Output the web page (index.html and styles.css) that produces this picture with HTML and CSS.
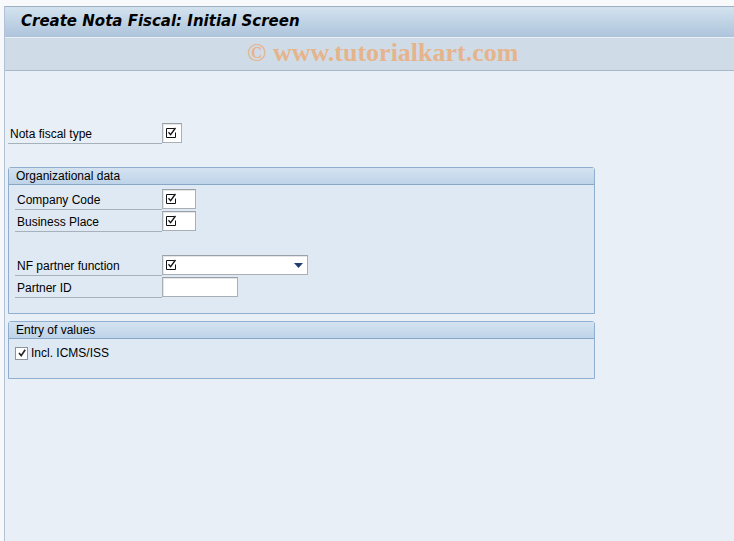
FILE: index.html
```html
<!DOCTYPE html>
<html>
<head>
<meta charset="utf-8">
<link rel="stylesheet" href="styles.css">
</head>
<body>
<div class="topstrip"></div>
<div class="frame">
  <div class="titlebar"><span class="title">Create Nota Fiscal: Initial Screen</span></div>
  <div class="toolbar"><span class="watermark">© www.tutorialkart.com</span></div>
  <div class="content">
    <div class="row nota">
      <div class="label w154">Nota fiscal type</div>
      <div class="input w20"><svg class="req" viewBox="0 0 11 11" width="11" height="11"><path d="M0.5 1.5H8.5M0.5 1.5V10.5H9.5V5.5" fill="none" stroke="#111" stroke-width="1"/><path d="M2.5 5.2L4.6 7.6L9.5 1" fill="none" stroke="#111" stroke-width="1.3"/></svg></div>
    </div>

    <div class="group g1">
      <div class="ghead">Organizational data</div>
      <div class="gbody">
        <div class="row">
          <div class="label w147">Company Code</div>
          <div class="input w34"><svg class="req" viewBox="0 0 11 11" width="11" height="11"><path d="M0.5 1.5H8.5M0.5 1.5V10.5H9.5V5.5" fill="none" stroke="#111" stroke-width="1"/><path d="M2.5 5.2L4.6 7.6L9.5 1" fill="none" stroke="#111" stroke-width="1.3"/></svg></div>
        </div>
        <div class="row">
          <div class="label w147">Business Place</div>
          <div class="input w34"><svg class="req" viewBox="0 0 11 11" width="11" height="11"><path d="M0.5 1.5H8.5M0.5 1.5V10.5H9.5V5.5" fill="none" stroke="#111" stroke-width="1"/><path d="M2.5 5.2L4.6 7.6L9.5 1" fill="none" stroke="#111" stroke-width="1.3"/></svg></div>
        </div>
        <div class="row empty"></div>
        <div class="row">
          <div class="label w147">NF partner function</div>
          <div class="input w146 dd"><svg class="req" viewBox="0 0 11 11" width="11" height="11"><path d="M0.5 1.5H8.5M0.5 1.5V10.5H9.5V5.5" fill="none" stroke="#111" stroke-width="1"/><path d="M2.5 5.2L4.6 7.6L9.5 1" fill="none" stroke="#111" stroke-width="1.3"/></svg><svg class="arrow" viewBox="0 0 9 5" width="9" height="5"><path d="M0 0H9L4.5 5Z" fill="#1f3d6e"/></svg></div>
        </div>
        <div class="row">
          <div class="label w147">Partner ID</div>
          <div class="input w76"></div>
        </div>
      </div>
    </div>

    <div class="group g2">
      <div class="ghead">Entry of values</div>
      <div class="gbody2">
        <div class="cbrow">
          <span class="cb"><svg viewBox="0 0 10 10" width="10" height="10"><path d="M2 5L4.2 7.6L8.2 1.8" fill="none" stroke="#222" stroke-width="1.6"/></svg></span>
          <span class="cblabel">Incl. ICMS/ISS</span>
        </div>
      </div>
    </div>
  </div>
</div>
</body>
</html>
```

FILE: styles.css
```css
html, body {
  margin: 0;
  padding: 0;
  height: 100%;
}
body {
  background: #f6f8fb;
  font-family: "Liberation Sans", Arial, sans-serif;
  font-size: 12px;
  color: #000;
  overflow: hidden;
}
.topstrip {
  height: 6px;
  background: #f7f9fb;
}
.frame {
  margin-left: 4px;
  border-left: 1px solid #b3c2d2;
  height: calc(100% - 6px);
  background: #e8eff7;
  display: flex;
  flex-direction: column;
}
.titlebar {
  height: 30px;
  border-top: 1px solid #9fb0c4;
  background: linear-gradient(#d3e2ee, #adc4dc);
  display: flex;
  align-items: center;
  padding-left: 16px;
}
.title {
  font-family: "DejaVu Sans", sans-serif;
  font-weight: bold;
  font-style: italic;
  font-size: 15px;
  letter-spacing: 0;
  color: #000;
  margin-top: -2px;
}
.toolbar {
  height: 32px;
  border-top: 1px solid #e9eff5;
  border-bottom: 1px solid #a8b8ca;
  background: #cfdce7;
  display: flex;
  align-items: center;
  padding-left: 242px;
}
.watermark {
  font-family: "Liberation Serif", serif;
  font-weight: bold;
  font-size: 26px;
  color: #e6b48c;
  margin-top: -3px;
}
.content {
  flex: 1;
  padding: 52px 0 0 3px;
}
.row {
  display: flex;
  height: 20px;
  margin-bottom: 2px;
}
.row.empty {
  margin-bottom: 2px;
}
.label {
  box-sizing: border-box;
  height: 21px;
  border-bottom: 1px solid #a7b1bb;
  padding-left: 2px;
  line-height: 22px;
  white-space: nowrap;
}
.w154 { width: 154px; }
.w147 { width: 147px; }
.input {
  box-sizing: border-box;
  height: 20px;
  background: #fff;
  border: 1px solid #a9afb5;
  border-top-color: #9aa0a6;
  box-shadow: inset 1px 1px 0 #e4e6e8;
  position: relative;
}
.w20 { width: 20px; }
.w34 { width: 34px; }
.w76 { width: 76px; }
.w146 { width: 146px; }
.req {
  position: absolute;
  left: 3px;
  top: 3px;
}
.arrow {
  position: absolute;
  right: 4px;
  top: 7px;
}
.nota {
  margin-bottom: 24px;
}
.group {
  width: 587px;
  box-sizing: border-box;
  border: 1px solid #8eafd0;
  border-radius: 3px 3px 0 0;
  background: #dee9f4;
}
.ghead {
  height: 16px;
  border-bottom: 1px solid #87a7c8;
  background: linear-gradient(#d5e3f0, #bed3e9);
  padding-left: 7px;
  line-height: 16px;
  color: #000;
}
.gbody {
  padding: 4px 0 15px 6px;
}
.g1 {
  height: 147px;
}
.g2 {
  margin-top: 7px;
  height: 58px;
}
.gbody2 {
  padding: 7px 0 0 6px;
}
.cbrow {
  display: flex;
  align-items: center;
  height: 14px;
}
.cb {
  box-sizing: border-box;
  width: 13px;
  height: 13px;
  border: 1px solid #8d949b;
  background: #fff;
  display: flex;
  align-items: center;
  justify-content: center;
}
.cblabel {
  margin-left: 3px;
  line-height: 14px;
}
```
